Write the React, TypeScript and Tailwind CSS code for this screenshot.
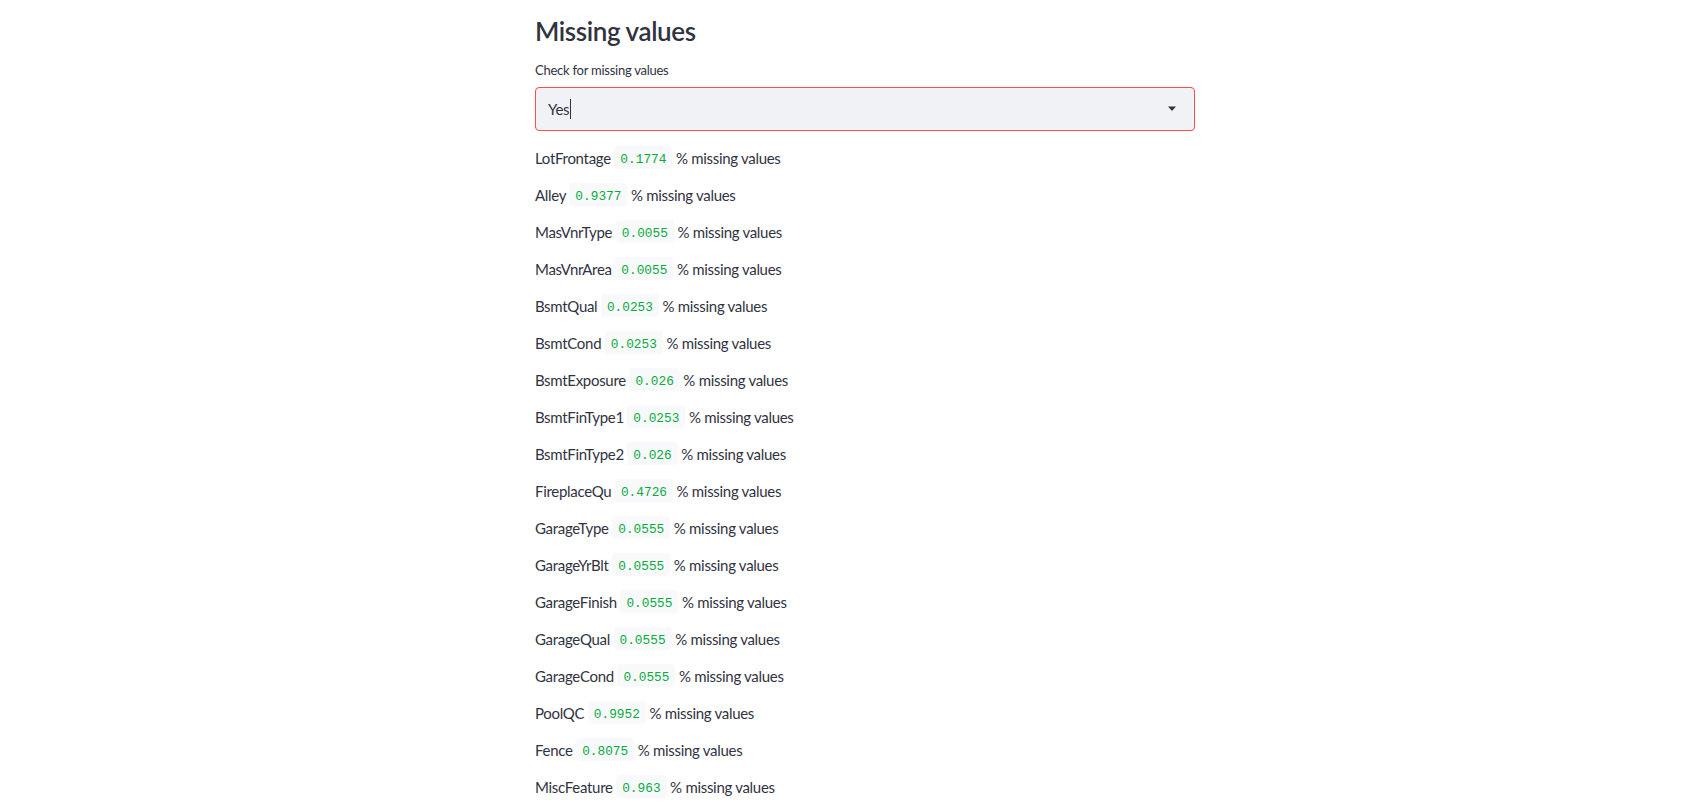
import React from "react";

const rows: [string, string][] = [
  ["LotFrontage", "0.1774"],
  ["Alley", "0.9377"],
  ["MasVnrType", "0.0055"],
  ["MasVnrArea", "0.0055"],
  ["BsmtQual", "0.0253"],
  ["BsmtCond", "0.0253"],
  ["BsmtExposure", "0.026"],
  ["BsmtFinType1", "0.0253"],
  ["BsmtFinType2", "0.026"],
  ["FireplaceQu", "0.4726"],
  ["GarageType", "0.0555"],
  ["GarageYrBlt", "0.0555"],
  ["GarageFinish", "0.0555"],
  ["GarageQual", "0.0555"],
  ["GarageCond", "0.0555"],
  ["PoolQC", "0.9952"],
  ["Fence", "0.8075"],
  ["MiscFeature", "0.963"],
];

export default function App() {
  return (
    <div className="w-[1694px] h-[812px] overflow-hidden bg-white text-[#31333f] font-['Lato','Noto_Sans',sans-serif]">
      <div className="ml-[535px] w-[660px] flex flex-col">
        <h2 className="mt-[14px] h-[34px] text-[26px] leading-[34px] font-semibold tracking-[-0.4px]">
          Missing values
        </h2>
        <label className="mt-[12px] h-[20px] text-[13px] leading-[20px] tracking-[-0.25px]">Check for missing values</label>
        <div className="mt-[7px] h-[44px] rounded-[4px] border border-[#ff4b4b] bg-[#f0f2f6] flex items-center pl-[12px] pr-[17px]">
          <span className="text-[15px] leading-[20px] tracking-[-0.3px]">Yes</span>
          <span className="ml-[1px] w-px h-[20px] bg-[#31333f]" />
          <div className="flex-1" />
          <svg width="10" height="6" viewBox="0 0 10 6" className="text-[#31333f]">
            <path d="M1 0.5 L9 0.5 L5 5 Z" fill="currentColor" />
          </svg>
        </div>
        <div className="mt-[8px] flex flex-col">
          {rows.map(([name, val]) => (
            <div key={name} className="h-[37px] flex items-center text-[15px] leading-[24px] tracking-[-0.3px] whitespace-pre">
              <span>{name} </span>
              <code className="block overflow-hidden font-['Liberation_Mono',monospace] text-[12.8px] leading-[27px] tracking-normal h-[23px] px-[6px] rounded-[4px] bg-[#f8f9fb] text-[#09ab3b]">
                {val}
              </code>
              <span> % missing values</span>
            </div>
          ))}
        </div>
      </div>
    </div>
  );
}
